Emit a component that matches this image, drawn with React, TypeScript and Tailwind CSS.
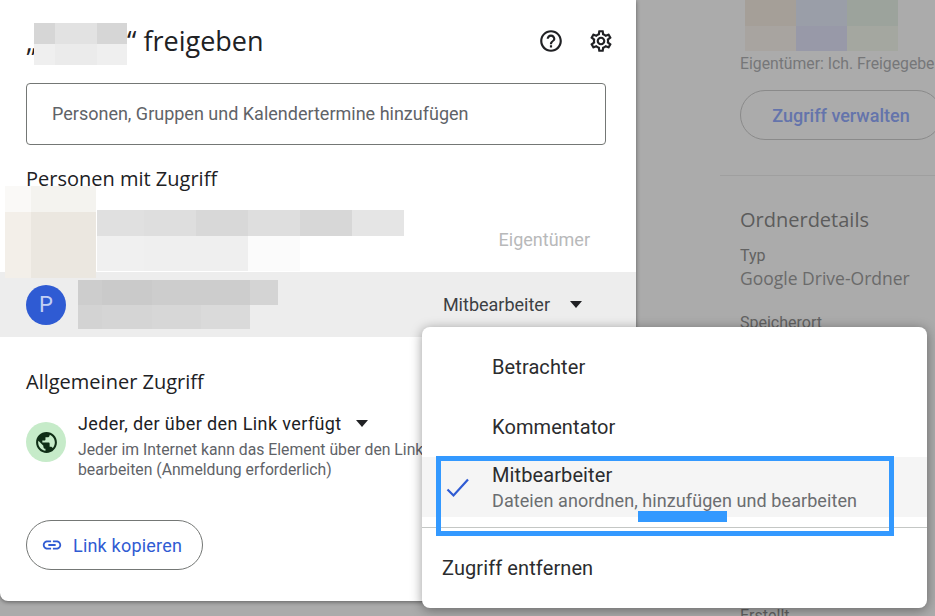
import { MdLink, MdOutlineHelpOutline, MdOutlineSettings, MdPublic } from "react-icons/md";

const heading = "font-['Open_Sans',sans-serif]";

// pixelated redaction blocks, rows of full class names
const Mosaic = ({ rows, className = "" }: { rows: string[][]; className?: string }) => (
  <div className={`flex flex-col ${className}`}>
    {rows.map((row, i) => (
      <div className="flex" key={i}>
        {row.map((cell, j) => (
          <div className={cell} key={j} />
        ))}
      </div>
    ))}
  </div>
);

const Caret = ({ className = "" }: { className?: string }) => (
  <span
    className={`inline-block h-0 w-0 border-x-[6.5px] border-t-[7px] border-x-transparent border-t-[#202124] ${className}`}
  />
);

const ShareDialog = () => (
  <div className="relative flex h-[601px] w-[636px] shrink-0 flex-col rounded-bl-lg bg-white shadow-[0_1px_4px_rgba(0,0,0,0.45)]">
    {/* Title */}
    <div className="flex h-[83px] items-start pl-[26px] pr-[22px] pt-[23px]">
      <div className={`flex h-[42px] items-center text-[27px] text-[#202124] ${heading}`}>
        <span className="mb-[6px] w-[8px]">„</span>
        <Mosaic
          rows={[
            ["h-[21px] w-[21px] bg-[#d6d6d6]", "h-[21px] w-[42px] bg-[#e2e2e2]", "h-[21px] w-[30px] bg-[#d6d6d6]"],
            ["h-[21px] w-[21px] bg-[#efefef]", "h-[21px] w-[42px] bg-[#ebebeb]", "h-[21px] w-[30px] bg-[#efefef]"],
          ]}
        />
        <span className="mb-[6px] whitespace-pre">“ freigeben</span>
      </div>
      <div className="ml-auto flex h-[36px] items-center gap-[24px] text-[#202124]">
        <MdOutlineHelpOutline size={26} />
        <MdOutlineSettings size={26} />
      </div>
    </div>

    {/* Add people */}
    <div className="mx-[26px] mr-[30px] flex h-[62px] items-center rounded border border-[#747775] pb-[1px] pl-[25px] font-['Roboto',sans-serif] text-[18px] text-[#5f6368]">
      Personen, Gruppen und Kalendertermine hinzufügen
    </div>

    <div className={`mt-[20px] pl-[26px] text-[20px] leading-[28px] text-[#202124] ${heading}`}>
      Personen mit Zugriff
    </div>

    {/* Owner row */}
    <div className="mt-[17px] flex h-[62px] items-start pl-[97px] pr-[46px] font-['Roboto',sans-serif]">
      <Mosaic
        rows={[
          ["h-[26px] w-[47px] bg-[#e0e0e0]", "h-[26px] w-[52px] bg-[#dedede]", "h-[26px] w-[52px] bg-[#d8d8d8]", "h-[26px] w-[52px] bg-[#dedede]", "h-[26px] w-[52px] bg-[#d7d7d7]", "h-[26px] w-[52px] bg-[#e5e5e5]"],
          ["h-[35px] w-[47px] bg-[#f0f0f0]", "h-[35px] w-[52px] bg-[#efefef]", "h-[35px] w-[52px] bg-[#efefef]", "h-[35px] w-[52px] bg-[#fbfbfb]"],
        ]}
      />
      <span className="ml-auto pt-[16px] text-[18px] text-[#b8b9ba]">Eigentümer</span>
    </div>

    {/* Owner avatar, covered with a blur block */}
    <Mosaic
      className="absolute left-[5px] top-[186px]"
      rows={[
        ["h-[26px] w-[26px] bg-[#faf9f7]", "h-[26px] w-[65px] bg-[#f4f3ef]"],
        ["h-[66px] w-[26px] bg-[#f3efe9]", "h-[66px] w-[65px] bg-[#ebe7e0]"],
      ]}
    />

    {/* Selected row */}
    <div className="flex h-[65px] items-center bg-[#ededed] pl-[26px] pr-[54px] font-['Roboto',sans-serif]">
      <div className="flex h-[40px] w-[40px] items-center justify-center rounded-full bg-[#2f5bd3] text-[22px] text-[#c3d0f3]">
        P
      </div>
      <Mosaic
        className="ml-[12px]"
        rows={[
          ["h-[25px] w-[24px] bg-[#cdcdcd]", "h-[25px] w-[50px] bg-[#cacaca]", "h-[25px] w-[98px] bg-[#cdcdcd]", "h-[25px] w-[28px] bg-[#d4d4d4]"],
          ["h-[24px] w-[24px] bg-[#d3d3d3]", "h-[24px] w-[50px] bg-[#d5d5d5]", "h-[24px] w-[49px] bg-[#d7d7d7]", "h-[24px] w-[49px] bg-[#dadada]"],
        ]}
      />
      <span className="ml-auto text-[18px] text-[#3c4043]">Mitbearbeiter</span>
      <Caret className="ml-[20px]" />
    </div>

    <div className={`mt-[31px] pl-[26px] text-[20px] leading-[28px] text-[#202124] ${heading}`}>
      Allgemeiner Zugriff
    </div>

    {/* General access */}
    <div className="mt-[15px] flex pl-[26px] font-['Roboto',sans-serif]">
      <div className="mt-[11px] flex h-[40px] w-[40px] items-center justify-center rounded-full bg-[#c6ebc9] text-[#0f2d16]">
        <MdPublic size={25} />
      </div>
      <div className="ml-[12px]">
        <div className="flex h-[24px] items-center text-[18px] tracking-[0.4px] text-[#202124]">
          Jeder, der über den Link verfügt
          <Caret className="ml-[14px]" />
        </div>
        <p className="mt-[5px] w-[350px] text-[15.75px] leading-[20px] text-[#5f6368]">
          Jeder im Internet kann das Element über den Link bearbeiten (Anmeldung erforderlich)
        </p>
      </div>
    </div>

    <button className="ml-[26px] mt-[40px] flex h-[50px] w-[177px] items-center rounded-full border border-[#747775] pl-[14px] font-['Roboto',sans-serif] text-[18px] tracking-[0.2px] text-[#2f5bd3]">
      <MdLink size={22} />
      <span className="ml-[10px]">Link kopieren</span>
    </button>
  </div>
);

const DetailsPanel = () => (
  <div className="flex min-w-0 flex-1 flex-col overflow-hidden pl-[84px] font-['Roboto',sans-serif]">
    <Mosaic
      className="ml-[25px]"
      rows={[
        ["h-[26px] w-[51px] bg-[#a59f98]", "h-[26px] w-[51px] bg-[#9a9ea8]", "h-[26px] w-[51px] bg-[#9ca39c]"],
        ["h-[25px] w-[51px] bg-[#a8a4a0]", "h-[25px] w-[51px] bg-[#9899a8]", "h-[25px] w-[51px] bg-[#a4a7a0]"],
      ]}
    />
    <div className="ml-[20px] mt-[3px] h-[20px] whitespace-nowrap text-[15.75px] leading-[20px] text-[#767779]">
      Eigentümer: Ich. Freigegeben
    </div>
    <div className="ml-[20px] mt-[16px] flex h-[50px] w-[202px] shrink-0 items-center justify-center rounded-full border border-[#8a8a8a] text-[18px] font-medium text-[#6474ab]">
      Zugriff verwalten
    </div>
    <div className="mt-[35px] h-px w-full shrink-0 bg-[#9f9f9f]" />
    <div className={`ml-[20px] mt-[31px] text-[20px] leading-[26px] text-[#5c5c5c] ${heading}`}>Ordnerdetails</div>
    <div className="ml-[20px] mt-[13px] text-[16px] leading-[20px] text-[#626262]">Typ</div>
    <div className={`ml-[20px] text-[17.5px] leading-[24px] text-[#6a6a6a] ${heading}`}>Google Drive-Ordner</div>
    <div className="ml-[20px] mt-[23px] text-[16px] leading-[20px] text-[#626262]">Speicherort</div>
    <div className="ml-[20px] mt-[273px] text-[16px] leading-[20px] text-[#626262]">Erstellt</div>
  </div>
);

const RoleMenu = () => (
  <div className="absolute left-[422px] top-[327px] flex h-[281px] w-[505px] flex-col rounded-lg bg-white py-[10px] font-['Roboto',sans-serif] text-[20px] tracking-[0.1px] text-[#2b2c2e] shadow-[0_2px_12px_rgba(0,0,0,0.4)]">
    <div className="flex h-[60px] shrink-0 items-center pl-[70px]">Betrachter</div>
    <div className="flex h-[60px] shrink-0 items-center pl-[70px]">Kommentator</div>
    <div className="flex h-[60px] shrink-0 items-center bg-[#f5f5f5]">
      <svg width="70" height="60" viewBox="0 0 70 60" fill="none" className="shrink-0">
        <path d="M25.5 32.5 L31.5 38.5 L46 22.5" stroke="#2f5bd3" strokeWidth="2.2" />
      </svg>
      <div className="pt-[1px]">
        <div className="text-[20px] leading-[24px]">Mitbearbeiter</div>
        <div className="mt-[2px] text-[18px] leading-[24px] tracking-[0.08px] text-[#6b6d70]">
          Dateien anordnen, hinzufügen und bearbeiten
        </div>
      </div>
    </div>
    <div className="mt-[10px] h-px shrink-0 bg-[#c4c7c5]" />
    <div className="flex flex-1 items-center pl-[20px] pt-[10px]">Zugriff entfernen</div>

    {/* Annotation drawn over the screenshot */}
    <div className="absolute left-[14px] top-[129px] h-[80px] w-[458px] border-[5px] border-[#3399ff]" />
    <div className="absolute left-[216px] top-[184px] h-[11px] w-[89px] bg-[#3399ff]" />
  </div>
);

export default function App() {
  return (
    <div className="relative flex h-[616px] w-[935px] overflow-hidden bg-[#ababab]">
      <ShareDialog />
      <DetailsPanel />
      <RoleMenu />
    </div>
  );
}
